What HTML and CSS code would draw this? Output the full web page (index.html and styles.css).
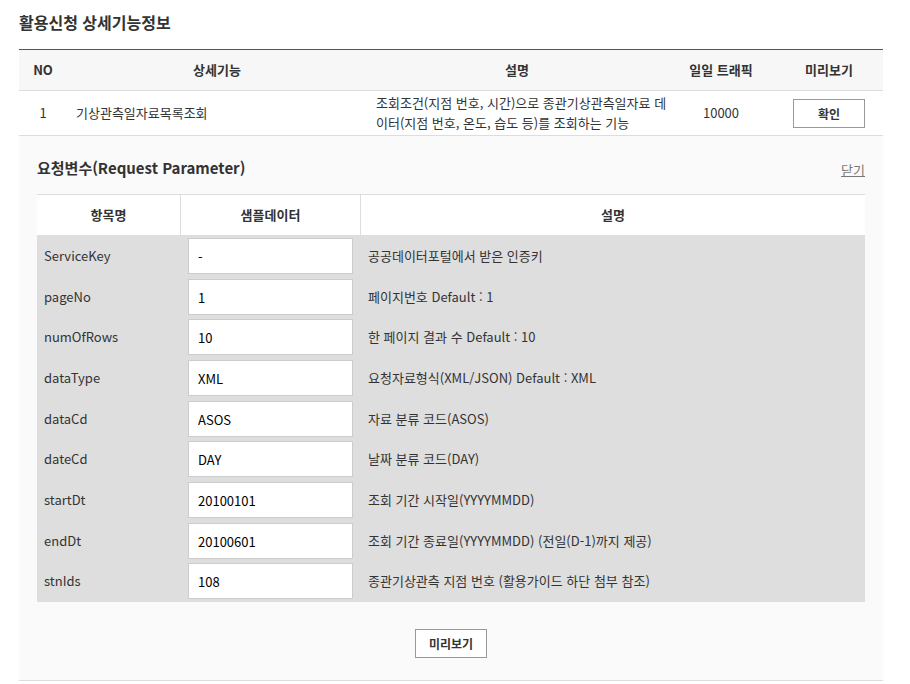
FILE: index.html
```html
<!DOCTYPE html>
<html lang="ko">
<head>
  <meta charset="UTF-8">
  <title>활용신청 상세기능정보</title>
  <link rel="stylesheet" href="styles.css">
</head>
<body>
<div class="container">
  <h2 class="title">활용신청 상세기능정보</h2>

  <table class="func-table">
    <colgroup>
      <col class="col-no">
      <col class="col-func">
      <col class="col-desc">
      <col class="col-traffic">
      <col class="col-preview">
    </colgroup>
    <thead>
      <tr>
        <th>NO</th>
        <th>상세기능</th>
        <th>설명</th>
        <th>일일 트래픽</th>
        <th>미리보기</th>
      </tr>
    </thead>
    <tbody>
      <tr>
        <td class="center">1</td>
        <td>기상관측일자료목록조회</td>
        <td class="desc">조회조건(지점 번호, 시간)으로 종관기상관측일자료 데이터(지점 번호, 온도, 습도 등)를 조회하는 기능</td>
        <td class="center">10000</td>
        <td class="center"><button type="button" class="btn">확인</button></td>
      </tr>
    </tbody>
  </table>

  <!-- 요청변수 -->
  <form class="param-box">
    <div class="param-head">
      <h3 class="sub-title">요청변수(Request Parameter)</h3>
      <a href="#" class="close">닫기</a>
    </div>
    <table class="param-table">
      <colgroup>
        <col class="col-name">
        <col class="col-sample">
        <col>
      </colgroup>
      <thead>
        <tr>
          <th>항목명</th>
          <th>샘플데이터</th>
          <th>설명</th>
        </tr>
      </thead>
      <tbody>
        <tr>
          <td><label for="ServiceKey">ServiceKey</label></td>
          <td><input type="text" id="ServiceKey" value="-"></td>
          <td>공공데이터포털에서 받은 인증키</td>
        </tr>
        <tr>
          <td><label for="pageNo">pageNo</label></td>
          <td><input type="text" id="pageNo" value="1"></td>
          <td>페이지번호 Default : 1</td>
        </tr>
        <tr>
          <td><label for="numOfRows">numOfRows</label></td>
          <td><input type="text" id="numOfRows" value="10"></td>
          <td>한 페이지 결과 수 Default : 10</td>
        </tr>
        <tr>
          <td><label for="dataType">dataType</label></td>
          <td><input type="text" id="dataType" value="XML"></td>
          <td>요청자료형식(XML/JSON) Default : XML</td>
        </tr>
        <tr>
          <td><label for="dataCd">dataCd</label></td>
          <td><input type="text" id="dataCd" value="ASOS"></td>
          <td>자료 분류 코드(ASOS)</td>
        </tr>
        <tr>
          <td><label for="dateCd">dateCd</label></td>
          <td><input type="text" id="dateCd" value="DAY"></td>
          <td>날짜 분류 코드(DAY)</td>
        </tr>
        <tr>
          <td><label for="startDt">startDt</label></td>
          <td><input type="text" id="startDt" value="20100101"></td>
          <td>조회 기간 시작일(YYYYMMDD)</td>
        </tr>
        <tr>
          <td><label for="endDt">endDt</label></td>
          <td><input type="text" id="endDt" value="20100601"></td>
          <td>조회 기간 종료일(YYYYMMDD) (전일(D-1)까지 제공)</td>
        </tr>
        <tr>
          <td><label for="stnIds">stnIds</label></td>
          <td><input type="text" id="stnIds" value="108"></td>
          <td>종관기상관측 지점 번호 (활용가이드 하단 첨부 참조)</td>
        </tr>
      </tbody>
    </table>
    <div class="btn-area">
      <button type="button" class="btn">미리보기</button>
    </div>
  </form>
</div>
</body>
</html>
```

FILE: styles.css
```css
* {
  box-sizing: border-box;
}

body {
  margin: 0;
  background-color: #fff;
  color: #333;
  font-family: "Noto Sans CJK KR", sans-serif;
  font-size: 13px;
  line-height: 20px;
}

.container {
  padding: 10px 27px 0 19px;
}

.title,
.sub-title {
  margin: 0;
  font-size: 16px;
  line-height: 24px;
  font-weight: bold;
}

.sub-title {
  font-size: 15px;
}

table {
  width: 100%;
  border-collapse: separate;
  border-spacing: 0;
  table-layout: fixed;
}

.func-table {
  margin-top: 15px;
  border-top: 1px solid #555;
}

.func-table th {
  height: 41px;
  padding: 0;
  background-color: #f7f7f7;
  border-bottom: 1px solid #ddd;
}

.func-table td {
  height: 45px;
  padding: 2px 0 2px 9px;
  border-bottom: 1px solid #ddd;
  word-break: break-all;
}

.func-table .center {
  padding: 0;
  text-align: center;
}

.col-no { width: 48px; }
.col-func { width: 300px; }
.col-traffic { width: 108px; }
.col-preview { width: 108px; }

.btn {
  width: 72px;
  height: 29px;
  padding: 0;
  border: 1px solid #999;
  background-color: #fff;
  color: #333;
  font-family: inherit;
  font-size: 12px;
  font-weight: bold;
  cursor: pointer;
}

.param-box {
  padding: 20px 18px 22px;
  background-color: #fafafa;
  border-bottom: 1px solid #ddd;
}

.param-head {
  display: flex;
  justify-content: space-between;
  align-items: flex-end;
  margin-bottom: 14px;
}

.close {
  color: #777;
}

.param-table {
  border-bottom: 1px solid #dedede;
}

.param-table th {
  height: 41px;
  padding: 0;
  background-color: #fff;
  border-top: 1px solid #ddd;
  border-right: 1px solid #ddd;
}

.param-table th:last-child {
  border-right: 0;
}

.param-table td {
  height: 40px;
  padding: 2px 7px;
  background-color: #dedede;
  border-top: 1px solid #dedede;
}

.param-table tbody tr:nth-child(3n) td {
  border-top: 0;
}

.param-table td:nth-child(2) {
  padding-right: 8px;
}

.col-name { width: 144px; }
.col-sample { width: 180px; }

.param-table input {
  display: block;
  width: 100%;
  height: 36px;
  padding: 0 9px;
  border: 1px solid #ccc;
  background-color: #fff;
  color: #000;
  font-family: inherit;
  font-size: 13px;
}

.btn-area {
  margin-top: 27px;
  text-align: center;
}
```
